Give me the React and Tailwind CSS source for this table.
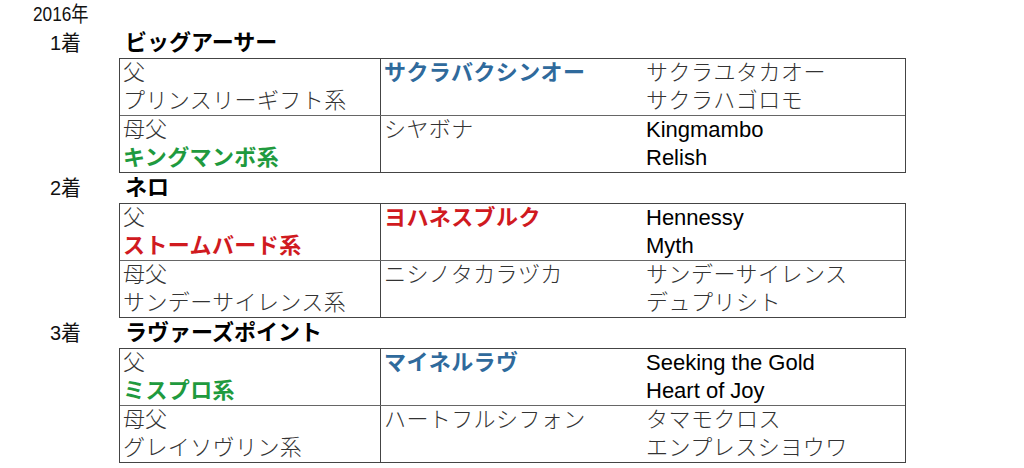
import React from 'react';

const font = { fontFamily: '"Liberation Sans", "Noto Sans CJK JP", sans-serif' };
const narrow = { fontFamily: '"Liberation Sans Narrow", "Liberation Sans", "Noto Sans CJK JP", sans-serif' };

const races = [
  {
    place: '1着',
    name: 'ビッグアーサー',
    rows: [
      {
        label: '父',
        line: { text: 'プリンスリーギフト系', cls: 'font-light text-[#333]' },
        horse: { text: 'サクラバクシンオー', cls: 'font-bold text-[#2f6a9c]' },
        parents: ['サクラユタカオー', 'サクラハゴロモ'],
      },
      {
        label: '母父',
        line: { text: 'キングマンボ系', cls: 'font-bold text-[#1f9a3e]' },
        horse: { text: 'シヤボナ', cls: 'font-light text-[#333]' },
        parents: ['Kingmambo', 'Relish'],
      },
    ],
  },
  {
    place: '2着',
    name: 'ネロ',
    rows: [
      {
        label: '父',
        line: { text: 'ストームバード系', cls: 'font-bold text-[#d01a1f]' },
        horse: { text: 'ヨハネスブルク', cls: 'font-bold text-[#d01a1f]' },
        parents: ['Hennessy', 'Myth'],
      },
      {
        label: '母父',
        line: { text: 'サンデーサイレンス系', cls: 'font-light text-[#333]' },
        horse: { text: 'ニシノタカラヅカ', cls: 'font-light text-[#333]' },
        parents: ['サンデーサイレンス', 'デュプリシト'],
      },
    ],
  },
  {
    place: '3着',
    name: 'ラヴァーズポイント',
    rows: [
      {
        label: '父',
        line: { text: 'ミスプロ系', cls: 'font-bold text-[#1f9a3e]' },
        horse: { text: 'マイネルラヴ', cls: 'font-bold text-[#2f6a9c]' },
        parents: ['Seeking the Gold', 'Heart of Joy'],
      },
      {
        label: '母父',
        line: { text: 'グレイソヴリン系', cls: 'font-light text-[#333]' },
        horse: { text: 'ハートフルシフォン', cls: 'font-light text-[#333]' },
        parents: ['タマモクロス', 'エンプレスシヨウワ'],
      },
    ],
  },
];

function isLatin(s) {
  return /^[A-Za-z ]+$/.test(s);
}

function PedigreeRow({ row, first }) {
  return (
    <div className={`grid grid-cols-[261px_262px_1fr] ${first ? '' : 'border-t border-[#666]'}`}>
      <div className="border-r border-[#444] pl-[3px]">
        <div className="font-light text-[#333]">{row.label}</div>
        <div className={`${row.line.cls} tracking-[0.4px]`}>{row.line.text}</div>
      </div>
      <div className="pl-[3px]">
        <div className={`${row.horse.cls} tracking-[0.4px]`}>{row.horse.text}</div>
      </div>
      <div className="pl-[3px]">
        {row.parents.map((p) => (
          <div key={p} className={isLatin(p) ? 'text-black' : 'font-light text-[#333] tracking-[0.5px]'}>
            {p}
          </div>
        ))}
      </div>
    </div>
  );
}

export default function App() {
  return (
    <div className="w-[1024px] h-[468px] bg-white overflow-hidden text-[22px] leading-[28px]" style={font}>
      <div className="h-[28px] pl-[33px] text-[21px] leading-[28px] text-[#111]" style={narrow}>
        <span className="inline-block origin-left scale-x-[0.82]">2016年</span>
      </div>
      {races.map((race) => (
        <div key={race.place} className="flex">
          <div className="w-[119px] shrink-0 pl-[50px] text-[21px] leading-[30px] text-[#111]" style={narrow}>
            <span className="inline-block origin-left scale-x-[0.95]">{race.place}</span>
          </div>
          <div className="w-[787px]">
            <div className="h-[30px] pl-[6px] leading-[30px] font-bold text-black">{race.name}</div>
            <div className="border border-[#444]">
              {race.rows.map((row, i) => (
                <PedigreeRow key={row.label} row={row} first={i === 0} />
              ))}
            </div>
          </div>
        </div>
      ))}
    </div>
  );
}
